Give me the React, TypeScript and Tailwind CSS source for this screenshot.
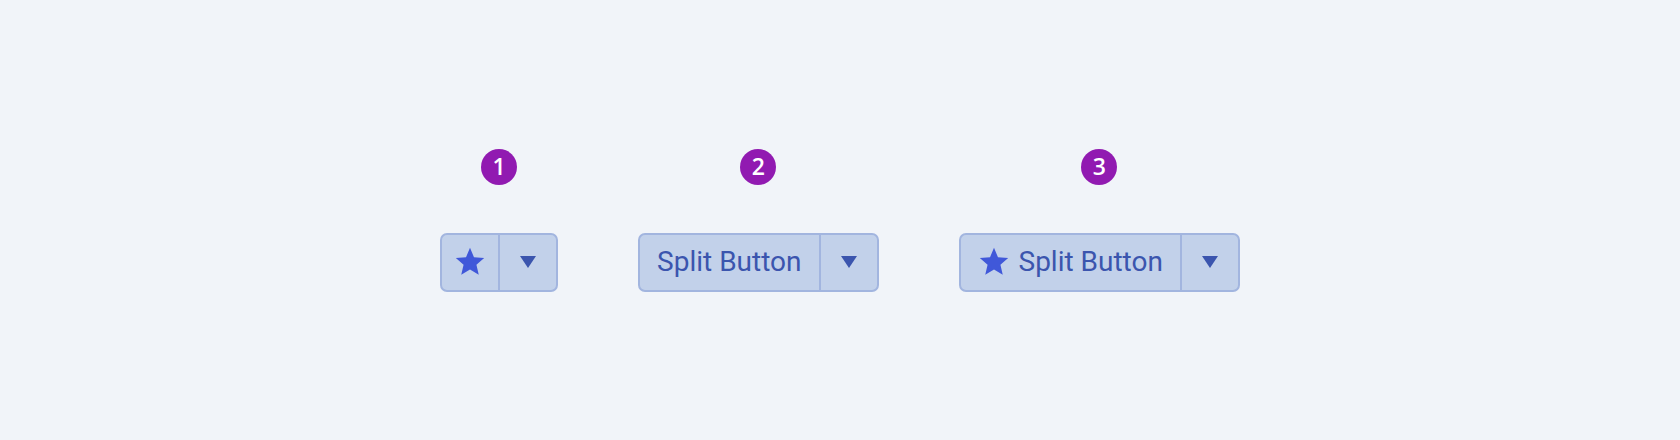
import React from 'react';

function Star() {
  return (
    <svg width="34" height="34" viewBox="0 0 24 24" className="shrink-0">
      <path
        fill="#4058d9"
        d="M12 17.27L18.18 21l-1.64-7.03L22 9.24l-7.19-.61L12 2 9.19 8.63 2 9.24l5.46 4.73L5.82 21z"
      />
    </svg>
  );
}

function Caret() {
  return (
    <svg width="16" height="12" viewBox="0 0 16 12">
      <path fill="#3b55ae" d="M0 0h16L8 12z" />
    </svg>
  );
}

function Badge({ n }: { n: number }) {
  return (
    <div className="w-[36px] h-[36px] rounded-full bg-[#911ab1] text-white flex items-center justify-center text-[23px] font-semibold leading-none pb-[1px] font-['Open_Sans',sans-serif]">
      {n}
    </div>
  );
}

function SplitButton({ icon, label }: { icon?: boolean; label?: string }) {
  return (
    <div className="flex h-[59px] border-2 border-[#a2b5df] rounded-[7px] bg-[#c2d1ea] text-[#3b55ae] font-['Roboto',sans-serif]">
      {label ? (
        <div className={`flex items-center ${icon ? 'pl-[16px] pr-[17px] gap-[8px]' : 'px-[17px]'} text-[28px] leading-none`}>
          {icon && <Star />}
          <span>{label}</span>
        </div>
      ) : (
        <div className="w-[56px] flex items-center justify-center">
          <Star />
        </div>
      )}
      <div className="w-[58px] border-l-2 border-[#a2b5df] flex items-center justify-center">
        <Caret />
      </div>
    </div>
  );
}

export default function App() {
  return (
    <div className="h-[440px] w-full bg-[#f1f4f9] flex items-center justify-center">
      <div className="flex items-end gap-[80px]">
        <div className="flex flex-col items-center gap-[48px]">
          <Badge n={1} />
          <SplitButton icon />
        </div>
        <div className="flex flex-col items-center gap-[48px]">
          <Badge n={2} />
          <SplitButton label="Split Button" />
        </div>
        <div className="flex flex-col items-center gap-[48px]">
          <Badge n={3} />
          <SplitButton icon label="Split Button" />
        </div>
      </div>
    </div>
  );
}
